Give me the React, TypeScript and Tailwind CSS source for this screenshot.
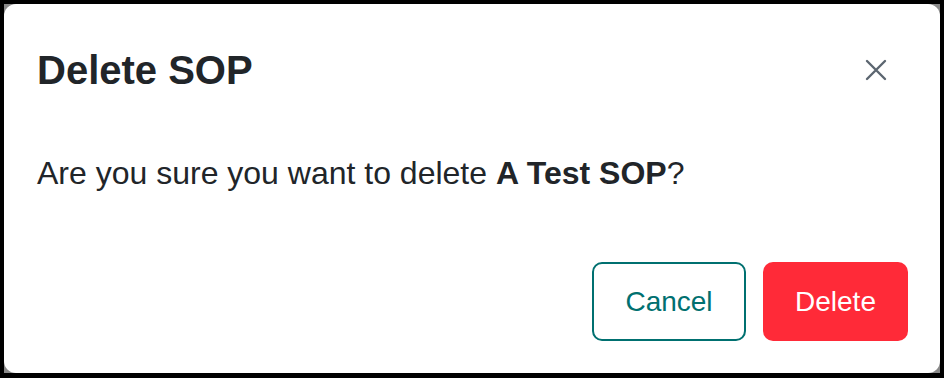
import React from "react";

export default function App() {
  return (
    <div className="w-[944px] h-[378px] bg-black pt-[4px] pl-[4px] pr-[4px] pb-[5px]" style={{ fontFamily: '"Liberation Sans", Arial, sans-serif' }}>
      <div className="w-full h-full bg-[#8a8a8a]">
        <div className="w-full h-full bg-white rounded-[12px] flex flex-col text-[#212529]">
          <div className="flex items-center justify-between pl-[33px] pr-[53px] pt-[42px]">
            <h1 className="text-[40px] leading-[48px] font-bold m-0">Delete SOP</h1>
            <button className="w-[22px] h-[22px] flex items-center justify-center text-[#5c6670]" aria-label="Close">
              <svg width="22" height="22" viewBox="0 0 22 22" fill="none" stroke="currentColor" strokeWidth="2.4" strokeLinecap="round">
                <path d="M2 2 L20 20 M20 2 L2 20" />
              </svg>
            </button>
          </div>
          <p className="pl-[33px] mt-[55px] text-[32px] leading-[48px]">
            Are you sure you want to delete <b className="font-bold">A Test SOP</b>?
          </p>
          <div className="flex justify-end gap-[17px] pr-[32px] mt-[65px]">
            <button className="w-[154px] h-[79px] rounded-[10px] border-2 border-[#007070] text-[#007070] text-[28px] bg-white">
              Cancel
            </button>
            <button className="w-[145px] h-[79px] rounded-[10px] bg-[#ff2a38] text-white text-[28px]">
              Delete
            </button>
          </div>
        </div>
      </div>
    </div>
  );
}
